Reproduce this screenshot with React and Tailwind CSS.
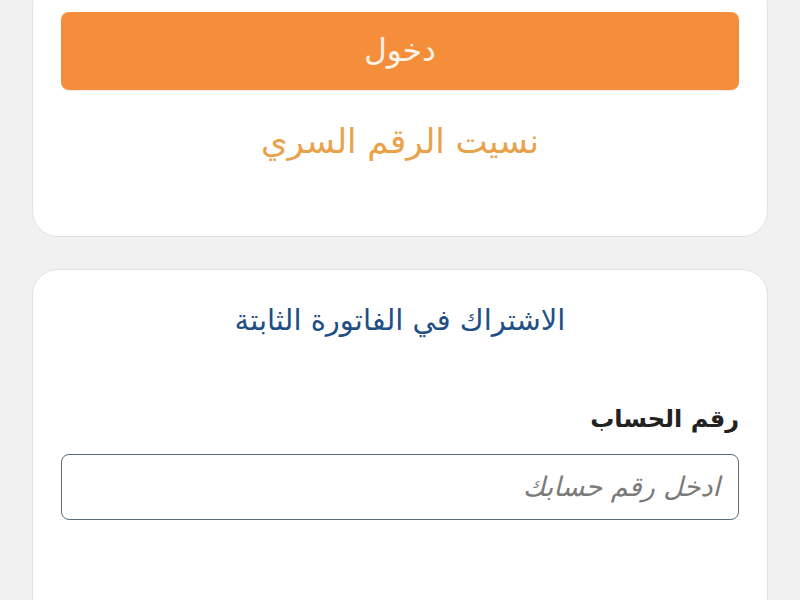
export default function App() {
  return (
    <div
      dir="rtl"
      className="h-[600px] overflow-hidden bg-[#f1f1f1] px-[32px]"
      style={{ fontFamily: '"DejaVu Sans", "Noto Sans", sans-serif' }}
    >
      <div className="-mt-[20px] rounded-[26px] border border-[#e3e3e3] bg-white px-[28px] pb-[74px] pt-[31px]">
        <button
          type="button"
          className="flex h-[78px] w-full items-center justify-center rounded-[8px] bg-[#f58e3a] pb-[2px] text-[31px] text-[#fdf3e8] shadow-[0_1px_1px_rgba(0,0,0,0.08)]"
        >
          دخول
        </button>
        <div className="mt-[30px] text-center text-[34px] leading-[42px] text-[#e9a24a]">
          نسيت الرقم السري
        </div>
      </div>

      <div className="mt-[32px] h-[400px] rounded-t-[26px] border border-[#e3e3e3] bg-white px-[28px] pt-[30px]">
        <h2 className="text-center text-[29px] leading-[40px] text-[#1f4f85]">
          الاشتراك في الفاتورة الثابتة
        </h2>
        <div className="mt-[62px] text-[24px] font-bold leading-[34px] text-[#222]">
          رقم الحساب
        </div>
        <div className="mt-[18px] flex h-[66px] items-center rounded-[8px] border border-[#5d6b7b] px-[18px]">
          <span className="text-[27px] italic text-[#7a7a7a]">ادخل رقم حسابك</span>
        </div>
      </div>
    </div>
  );
}
